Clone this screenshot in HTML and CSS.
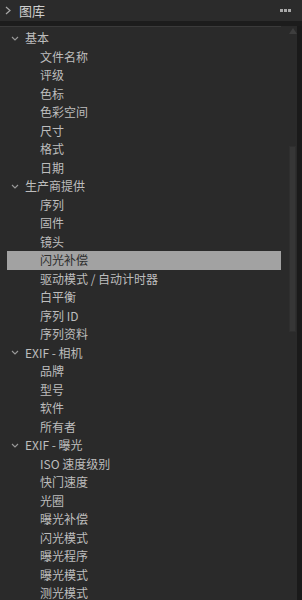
FILE: index.html
```html
<!DOCTYPE html>
<html lang="zh">
<head>
    <meta charset="UTF-8">
    <title>图库</title>
    <link rel="stylesheet" href="styles.css">
</head>
<body>
    <div class="header">
        <svg class="header-arrow" width="6" height="9" viewBox="0 0 6 9"><polyline points="1,1 5,4.5 1,8" fill="none" stroke="#a8a8a8" stroke-width="1.2"/></svg>
        <span class="header-title">图库</span>
        <span class="dots"><i></i><i></i><i></i></span>
    </div>
    <div class="panel">
        <div class="body">
            <div class="list">
                <div class="group"><svg class="chev" width="8" height="5" viewBox="0 0 8 5"><polyline points="1,1 4,4 7,1" fill="none" stroke="#9a9a9a" stroke-width="1.1"/></svg>基本</div>
                <div class="item">文件名称</div>
                <div class="item">评级</div>
                <div class="item">色标</div>
                <div class="item">色彩空间</div>
                <div class="item">尺寸</div>
                <div class="item">格式</div>
                <div class="item">日期</div>
                <div class="group"><svg class="chev" width="8" height="5" viewBox="0 0 8 5"><polyline points="1,1 4,4 7,1" fill="none" stroke="#9a9a9a" stroke-width="1.1"/></svg>生产商提供</div>
                <div class="item">序列</div>
                <div class="item">固件</div>
                <div class="item">镜头</div>
                <div class="item selected">闪光补偿</div>
                <div class="item">驱动模式 / 自动计时器</div>
                <div class="item">白平衡</div>
                <div class="item">序列 ID</div>
                <div class="item">序列资料</div>
                <div class="group"><svg class="chev" width="8" height="5" viewBox="0 0 8 5"><polyline points="1,1 4,4 7,1" fill="none" stroke="#9a9a9a" stroke-width="1.1"/></svg>EXIF - 相机</div>
                <div class="item">品牌</div>
                <div class="item">型号</div>
                <div class="item">软件</div>
                <div class="item">所有者</div>
                <div class="group"><svg class="chev" width="8" height="5" viewBox="0 0 8 5"><polyline points="1,1 4,4 7,1" fill="none" stroke="#9a9a9a" stroke-width="1.1"/></svg>EXIF - 曝光</div>
                <div class="item">ISO 速度级别</div>
                <div class="item">快门速度</div>
                <div class="item">光圈</div>
                <div class="item">曝光补偿</div>
                <div class="item">闪光模式</div>
                <div class="item">曝光程序</div>
                <div class="item">曝光模式</div>
                <div class="item">测光模式</div>
            </div>
            <div class="scroll">
                <svg class="scroll-up" width="8" height="6" viewBox="0 0 8 6"><polygon points="0,6 4,0 8,6" fill="#3e3e3e"/></svg>
                <div class="thumb"></div>
            </div>
        </div>
        <div class="edge"></div>
    </div>
</body>
</html>
```

FILE: styles.css
```css
html, body {
    margin: 0;
    height: 100%;
    overflow: hidden;
}

body {
    background-color: #1c1c1c;
    font-family: "Noto Sans CJK SC", "Noto Sans", sans-serif;
    font-size: 12px;
    color: #bdbdbd;
}

.header {
    height: 21px;
    background-color: #2b2b2b;
    display: flex;
    align-items: center;
    padding-left: 5px;
    padding-right: 11px;
}

.header-arrow {
    margin-right: 8px;
}

.header-title {
    font-size: 13px;
    color: #cfcfcf;
    flex: 1;
}

.dots {
    display: flex;
    gap: 1px;
}

.dots i {
    width: 3px;
    height: 3px;
    background-color: #a8a8a8;
}

.panel {
    display: flex;
    margin-top: 5px;
    height: 574px;
}

.body {
    width: 297px;
    display: flex;
    background-color: #2a2a2a;
}

.edge {
    flex: 1;
    background-color: #1a1a1a;
}

.list {
    width: 281px;
    border-top: 1px solid #3a3a3a;
    padding-top: 2px;
}

.group,
.item {
    height: 18.5px;
    line-height: 18.5px;
    white-space: nowrap;
}

.group {
    display: flex;
    align-items: center;
    padding-left: 11px;
}

.chev {
    margin-right: 6px;
}

.item {
    padding-left: 40px;
}

.item.selected {
    background-color: #a2a2a2;
    color: #2e2e2e;
    margin-left: 7px;
    padding-left: 33px;
}

.scroll {
    flex: 1;
    position: relative;
}

.scroll-up {
    position: absolute;
    left: 8px;
    top: 2px;
}

.thumb {
    position: absolute;
    left: 8px;
    top: 120px;
    width: 7px;
    height: 186px;
    background-color: #363636;
    border: 1px solid #2f2f2f;
    box-sizing: border-box;
}
```
